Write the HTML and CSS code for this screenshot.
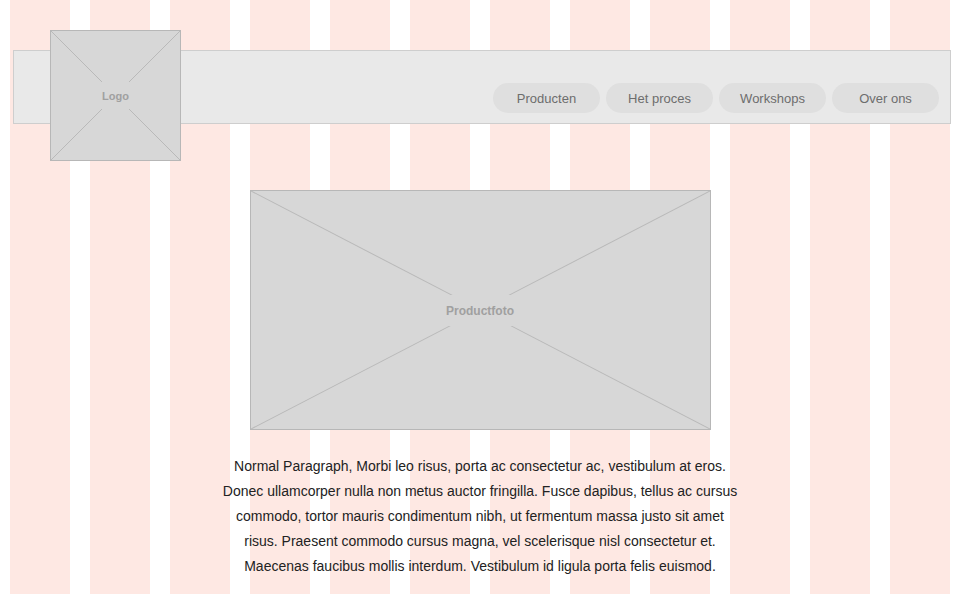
FILE: index.html
```html
<!DOCTYPE html>
<html lang="nl">
<head>
<meta charset="utf-8">
<meta name="viewport" content="width=device-width, initial-scale=1">
<title>Wireframe</title>
<link rel="stylesheet" href="styles.css">
</head>
<body>
<div class="columns" aria-hidden="true">
  <i></i><i></i><i></i><i></i><i></i><i></i><i></i><i></i><i></i><i></i><i></i><i></i>
</div>
<header class="header">
  <div class="placeholder logo">
    <svg class="cross" viewBox="0 0 100 100" preserveAspectRatio="none" aria-hidden="true"><path d="M0 0L100 100M100 0L0 100"/></svg>
    <span class="label">Logo</span>
  </div>
  <nav class="nav">
    <a href="#">Producten</a>
    <a href="#">Het proces</a>
    <a href="#">Workshops</a>
    <a href="#">Over ons</a>
  </nav>
</header>
<main class="main">
  <div class="placeholder photo">
    <svg class="cross" viewBox="0 0 100 100" preserveAspectRatio="none" aria-hidden="true"><path d="M0 0L100 100M100 0L0 100"/></svg>
    <span class="label">Productfoto</span>
  </div>
  <p class="text">Normal Paragraph, Morbi leo risus, porta ac consectetur ac, vestibulum at eros. Donec ullamcorper nulla non metus auctor fringilla. Fusce dapibus, tellus ac cursus commodo, tortor mauris condimentum nibh, ut fermentum massa justo sit amet risus. Praesent commodo cursus magna, vel scelerisque nisl consectetur et. Maecenas faucibus mollis interdum. Vestibulum id ligula porta felis euismod.</p>
</main>
</body>
</html>
```
FILE: styles.css
```css
* {
  box-sizing: border-box;
}

body {
  position: relative;
  display: flow-root;
  min-height: 100vh;
  margin: 0;
  background: #fff;
  color: #222;
  font-family: "Liberation Sans", Arial, sans-serif;
}

/* Layout grid shown behind the page */
.columns {
  position: absolute;
  inset: 0;
  z-index: -1;
  display: grid;
  grid-template-columns: repeat(12, 1fr);
  gap: 20px;
  padding: 0 10px;
}

.columns i {
  background: #fee8e3;
}

.header {
  display: flex;
  justify-content: space-between;
  align-items: flex-end;
  margin: 50px 9px 0 13px;
  padding: 0 11px 0 36px;
  border: 1px solid #cecece;
  background: #e9e9e9;
}

.placeholder {
  position: relative;
  display: flex;
  align-items: center;
  justify-content: center;
  border: 1px solid #b7b7b7;
  background: #d7d7d7;
  color: #a0a0a0;
  font-weight: bold;
}

.cross {
  position: absolute;
  inset: 0;
  width: 100%;
  height: 100%;
}

.cross path {
  fill: none;
  stroke: #b9b9b9;
  stroke-width: 1px;
  vector-effect: non-scaling-stroke;
}

.label {
  position: relative;
  background: #d7d7d7;
}

/* The logo hangs over both edges of the bar */
.logo {
  width: 131px;
  height: 131px;
  margin: -21px 0 -38px;
  font-size: 11px;
}

.logo .label {
  padding: 2px 6px 0;
  line-height: 25px;
}

.nav {
  display: flex;
  gap: 6px;
  padding-bottom: 10px;
}

.nav a {
  width: 107px;
  padding-top: 2px;
  border-radius: 15px;
  background: #dfdfdf;
  color: #6d6d6d;
  font-size: 13px;
  line-height: 28px;
  text-align: center;
  text-decoration: none;
}

.main {
  display: flex;
  flex-direction: column;
  align-items: center;
  padding: 66px 10px 15px;
}

.photo {
  width: 100%;
  max-width: 461px;
  height: 240px;
  font-size: 12px;
}

.photo .label {
  padding: 2px 12px 0;
  line-height: 29px;
}

.text {
  max-width: 520px;
  margin: 24px 0 0;
  font-size: 14px;
  line-height: 25px;
  text-align: center;
}
```
